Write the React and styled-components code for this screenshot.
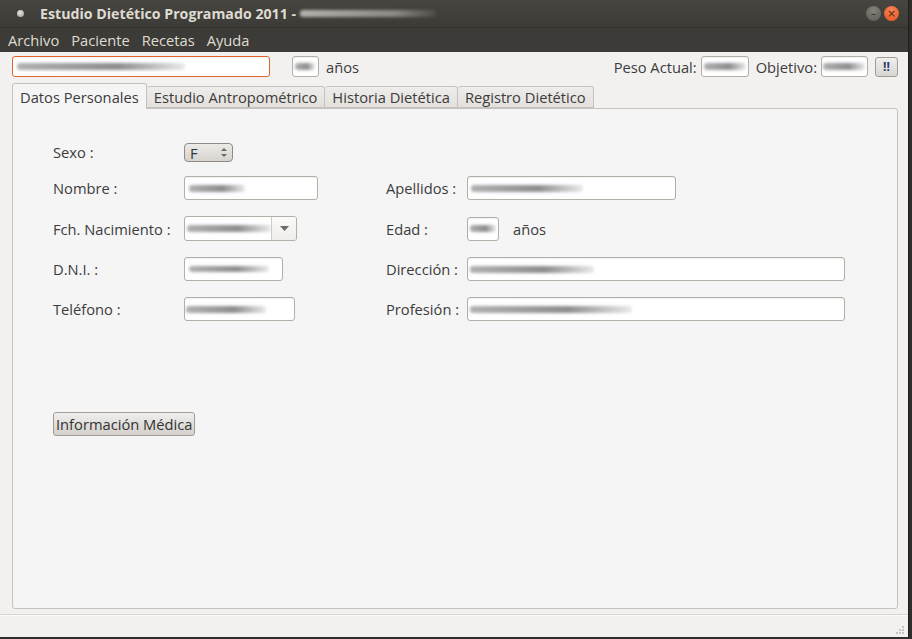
import styled, { createGlobalStyle } from 'styled-components'

const Global = createGlobalStyle`
  html, body { margin: 0; padding: 0; background: #2f2e2a; }
  body { font-family: "Open Sans", "DejaVu Sans", sans-serif; }
`

const Screen = styled.div`
  width: 912px;
  height: 639px;
  display: flex;
  background: #2f2e2a;
  overflow: hidden;
`

const Window = styled.div`
  width: 908px;
  height: 637px;
  display: flex;
  flex-direction: column;
  background: #f2f1f0;
  border-right: 1px solid #1e1d1a;
`

const TitleBar = styled.div`
  height: 28px;
  flex: none;
  display: flex;
  align-items: center;
  background: linear-gradient(#47453f, #3c3b37);
  border-bottom: 1px solid #34332f;
  box-sizing: border-box;
  padding-left: 17px;
  position: relative;
`

const AppDot = styled.span`
  width: 7px;
  height: 7px;
  border-radius: 50%;
  background: radial-gradient(circle at 40% 35%, #e8e6e1, #9b9891);
  margin-right: 16px;
`

const Title = styled.div`
  display: flex;
  align-items: center;
  font-weight: 700;
  font-size: 14.2px;
  color: #dfdbd2;
`

const Blur = styled.span`
  display: inline-block;
  width: ${p => p.w}px;
  height: ${p => p.h || 6}px;
  margin-left: ${p => p.ml || 0}px;
  border-radius: 3px;
  background: ${p => p.dark
    ? 'linear-gradient(90deg, rgba(200,198,192,0.85), rgba(170,168,162,0.7) 70%, rgba(120,118,112,0.2))'
    : 'linear-gradient(90deg, rgba(150,150,150,0.75), rgba(120,120,120,0.85) 60%, rgba(170,170,170,0.25))'};
  filter: blur(1.6px);
`

const WinButtons = styled.div`
  position: absolute;
  right: 9px;
  top: 6px;
  display: flex;
  gap: 3px;
`

const WinBtn = styled.span`
  width: 15px;
  height: 15px;
  border-radius: 50%;
  display: flex;
  align-items: center;
  justify-content: center;
  background: ${p => p.close
    ? 'radial-gradient(circle at 50% 30%, #f7875a, #e4501c)'
    : 'radial-gradient(circle at 50% 30%, #85827b, #5c5a55)'};
  color: ${p => p.close ? '#5a1e08' : '#2e2d2a'};
  font-size: 11px;
  line-height: 1;
  font-family: "DejaVu Sans", sans-serif;
`

const MenuBar = styled.div`
  height: 24px;
  flex: none;
  display: flex;
  align-items: center;
  background: #3c3b37;
  padding-left: 8px;
  gap: 12px;
`

const MenuItem = styled.span`
  font-size: 14.7px;
  color: #dfdbd2;
`

const Body = styled.div`
  flex: 1;
  display: flex;
  flex-direction: column;
  padding: 4px 10px 5px 12px;
  min-height: 0;
`

const TopRow = styled.div`
  height: 21px;
  display: flex;
  align-items: center;
  font-size: 14.7px;
  color: #3c3c3c;
`

const Field = styled.div`
  width: ${p => p.w}px;
  height: ${p => p.h || 24}px;
  box-sizing: border-box;
  flex: none;
  background: #fff;
  border: 1px solid ${p => p.focus ? '#e0652c' : '#b3aea6'};
  border-radius: 3px;
  display: flex;
  align-items: center;
  padding-left: ${p => p.pl || 3}px;
  margin-left: ${p => p.ml || 0}px;
  margin-right: ${p => p.mr || 0}px;
  box-shadow: inset 0 1px 1px rgba(0,0,0,0.06);
  overflow: hidden;
`

const Spacer = styled.div`
  flex: 1;
`

const BangBtn = styled.button`
  width: 23px;
  height: 20px;
  margin-left: 7px;
  padding: 0;
  border: 1px solid #a19d96;
  border-radius: 3px;
  background: linear-gradient(#f0efed, #d8d5d1);
  color: #2c3a6e;
  font-family: "Open Sans", sans-serif;
  font-weight: 700;
  font-size: 12px;
  line-height: 1;
`

const Tabs = styled.div`
  display: flex;
  align-items: flex-end;
  margin-top: 6px;
  height: 25px;
  position: relative;
  z-index: 1;
`

const Tab = styled.div`
  height: ${p => p.active ? 26 : 22}px;
  box-sizing: border-box;
  padding: 0 7px;
  display: flex;
  align-items: center;
  font-size: 14.7px;
  color: #3c3c3c;
  border: 1px solid #c6c3be;
  border-bottom: ${p => p.active ? 'none' : '1px solid #c6c3be'};
  border-left: ${p => p.first || p.active ? '1px solid #c6c3be' : 'none'};
  border-radius: 3px 3px 0 0;
  background: ${p => p.active ? '#f5f5f5' : 'linear-gradient(#efedeb, #e3e0dc)'};
  margin-bottom: ${p => p.active ? -1 : 0}px;
`

const Panel = styled.div`
  flex: 1;
  background: #f5f5f5;
  border: 1px solid #c6c3be;
  border-radius: 0 3px 3px 3px;
  padding: 28px 0 0 40px;
  display: flex;
  flex-direction: column;
`

const Form = styled.div`
  display: grid;
  grid-template-columns: 131px 202px 81px 378px;
  grid-template-rows: 23px 24px 25px 24px 24px;
  row-gap: 16px;
  align-items: center;
  font-size: 14.7px;
  color: #3c3c3c;
`

const Label = styled.span`
  white-space: nowrap;
  align-self: ${p => p.end ? 'end' : 'center'};
  margin-bottom: ${p => p.end ? -2 : 0}px;
`

const Cell = styled.div`
  display: flex;
  align-items: center;
  align-self: ${p => p.end ? 'end' : 'center'};
  margin-bottom: ${p => p.end ? -2 : 0}px;
`

const Spin = styled.div`
  width: 49px;
  height: 19px;
  box-sizing: border-box;
  border: 1px solid #8f8b84;
  border-radius: 4px;
  background: linear-gradient(#ecebe8, #d6d3ce);
  display: flex;
  align-items: center;
  justify-content: space-between;
  padding: 0 5px 0 5px;
  font-size: 14.7px;
  color: #333;
`

const Arrows = styled.span`
  display: flex;
  flex-direction: column;
  gap: 3px;
  align-items: center;
`

const Combo = styled.div`
  width: 113px;
  height: 25px;
  box-sizing: border-box;
  border: 1px solid #b3aea6;
  border-radius: 3px;
  display: flex;
  background: #fff;
  overflow: hidden;
`

const ComboText = styled.div`
  flex: 1;
  display: flex;
  align-items: center;
  padding-left: 2px;
  border-right: 1px solid #cfcbc5;
`

const ComboArrow = styled.div`
  width: 25px;
  display: flex;
  align-items: center;
  justify-content: center;
  background: linear-gradient(#fafaf9, #efedea);
`

const Unit = styled.span`
  margin-left: 14px;
`

const MedButton = styled.button`
  align-self: flex-start;
  margin-top: 91px;
  height: 24px;
  box-sizing: border-box;
  padding: 0 2px;
  border: 1px solid #a19d96;
  border-radius: 3px;
  background: linear-gradient(#efeeec, #d4d1cc);
  font-family: "Open Sans", "DejaVu Sans", sans-serif;
  font-size: 14.7px;
  color: #333;
  line-height: 1;
`

const StatusBar = styled.div`
  height: 23px;
  box-sizing: border-box;
  flex: none;
  border-top: 1px solid #d8d5d1;
  box-shadow: inset 0 1px 0 #fbfbfa;
  display: flex;
  justify-content: flex-end;
  align-items: flex-end;
  padding: 0 3px 2px 0;
`

const Grip = () => (
  <svg width="10" height="10" viewBox="0 0 10 10" style={{ display: 'block' }}>
    {[[8, 2], [5, 5], [8, 5], [2, 8], [5, 8], [8, 8]].map(([x, y], i) => (
      <rect key={i} x={x - 1} y={y - 1} width="2" height="2" fill="#c9c5bf" />
    ))}
  </svg>
)

const Down = ({ c = '#6d6a64' }) => (
  <svg width="9" height="5" viewBox="0 0 9 5"><path d="M0 0h9L4.5 5z" fill={c} /></svg>
)

export default function App() {
  return (
    <Screen>
      <Global />
      <Window>
        <TitleBar>
          <AppDot />
          <Title>
            Estudio Dietético Programado 2011 -
            <Blur w={136} h={7} ml={4} dark />
          </Title>
          <WinButtons>
            <WinBtn>–</WinBtn>
            <WinBtn close>×</WinBtn>
          </WinButtons>
        </TitleBar>
        <MenuBar>
          <MenuItem>Archivo</MenuItem>
          <MenuItem>Paciente</MenuItem>
          <MenuItem>Recetas</MenuItem>
          <MenuItem>Ayuda</MenuItem>
        </MenuBar>
        <Body>
          <TopRow>
            <Field w={258} h={21} focus pl={4}><Blur w={168} h={7} /></Field>
            <Field w={27} h={21} ml={22} mr={7} pl={2}><Blur w={20} h={7} /></Field>
            años
            <Spacer />
            Peso Actual:
            <Field w={48} h={21} ml={4} mr={7} pl={2}><Blur w={42} h={7} /></Field>
            Objetivo:
            <Field w={47} h={21} ml={4} pl={1}><Blur w={42} h={7} /></Field>
            <BangBtn>!!</BangBtn>
          </TopRow>
          <Tabs>
            <Tab active first>Datos Personales</Tab>
            <Tab>Estudio Antropométrico</Tab>
            <Tab>Historia Dietética</Tab>
            <Tab>Registro Dietético</Tab>
          </Tabs>
          <Panel>
            <Form>
              <Label end>Sexo :</Label>
              <Cell end>
                <Spin>
                  F
                  <Arrows>
                    <svg width="6" height="3" viewBox="0 0 6 3"><path d="M0 3h6L3 0z" fill="#6d6a64" /></svg>
                    <svg width="6" height="3" viewBox="0 0 6 3"><path d="M0 0h6L3 3z" fill="#6d6a64" /></svg>
                  </Arrows>
                </Spin>
              </Cell>
              <span />
              <span />

              <Label>Nombre :</Label>
              <Cell><Field w={134} pl={4}><Blur w={56} h={7} /></Field></Cell>
              <Label>Apellidos :</Label>
              <Cell><Field w={209} pl={3}><Blur w={112} h={7} /></Field></Cell>

              <Label>Fch. Nacimiento :</Label>
              <Cell>
                <Combo>
                  <ComboText><Blur w={84} h={7} /></ComboText>
                  <ComboArrow><Down /></ComboArrow>
                </Combo>
              </Cell>
              <Label>Edad :</Label>
              <Cell>
                <Field w={32} pl={2}><Blur w={26} h={7} /></Field>
                <Unit>años</Unit>
              </Cell>

              <Label>D.N.I. :</Label>
              <Cell><Field w={99} pl={4}><Blur w={80} h={6} /></Field></Cell>
              <Label>Dirección :</Label>
              <Cell><Field w={378} pl={2}><Blur w={124} h={7} /></Field></Cell>

              <Label>Teléfono :</Label>
              <Cell><Field w={111} pl={1}><Blur w={80} h={7} /></Field></Cell>
              <Label>Profesión :</Label>
              <Cell><Field w={378} pl={2}><Blur w={162} h={7} /></Field></Cell>
            </Form>
            <MedButton>Información Médica</MedButton>
          </Panel>
        </Body>
        <StatusBar><Grip /></StatusBar>
      </Window>
    </Screen>
  )
}
